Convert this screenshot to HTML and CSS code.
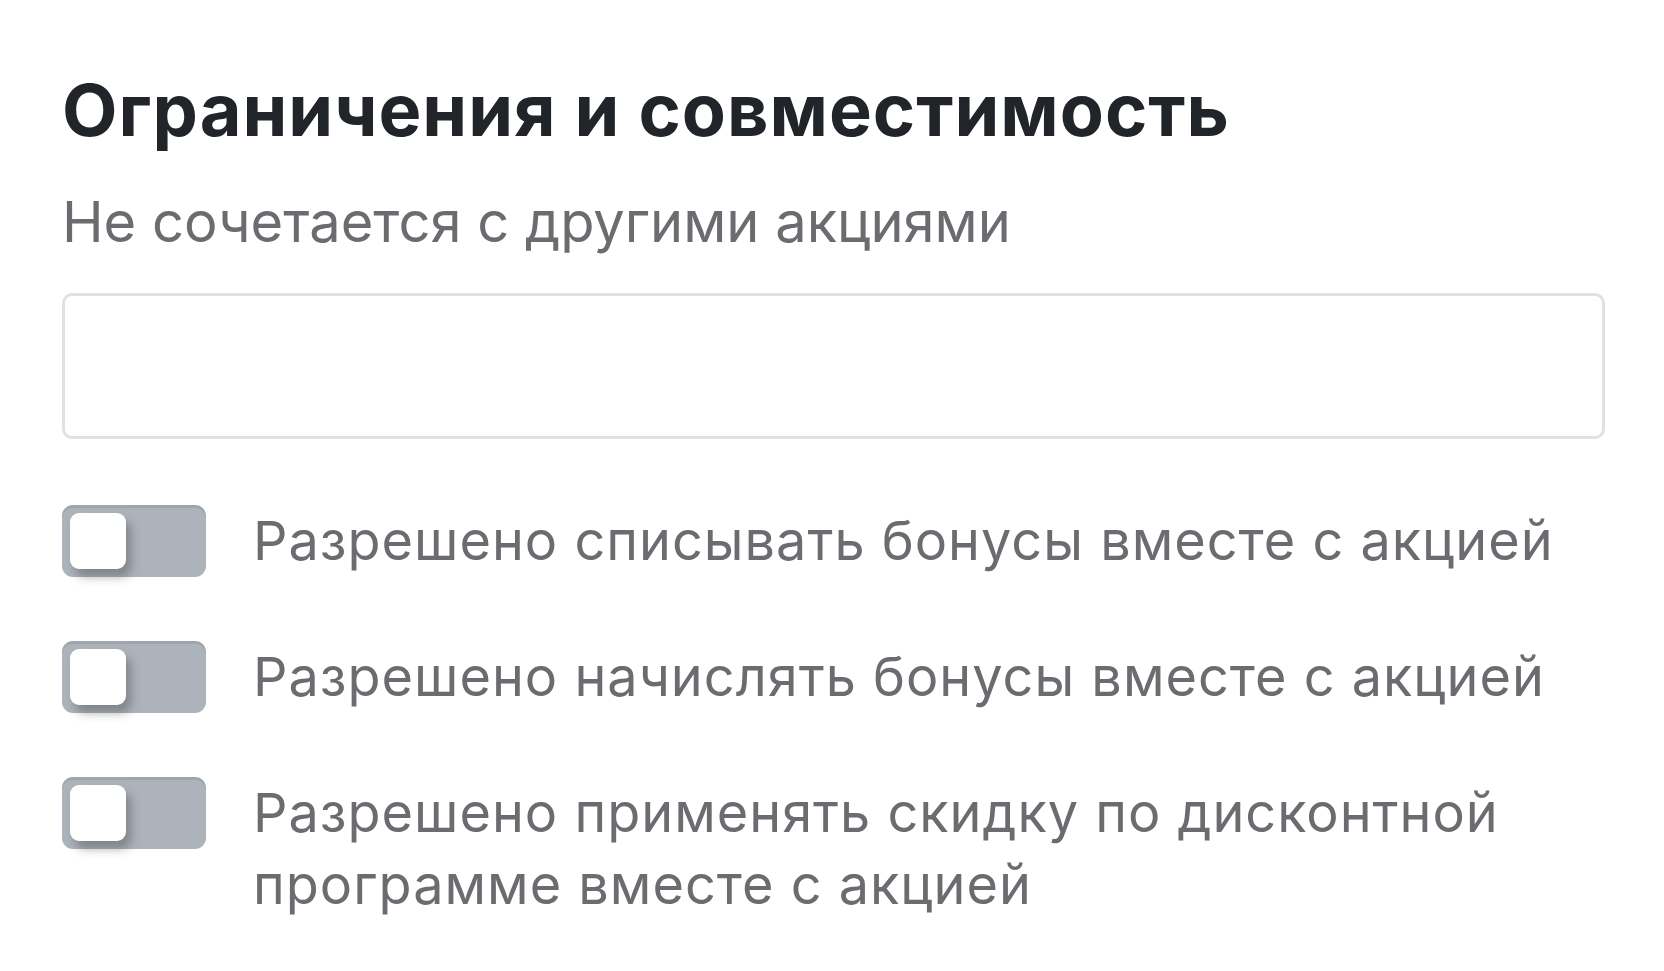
FILE: index.html
```html
<!DOCTYPE html>
<html lang="ru">
<head>
<meta charset="utf-8">
<title>Ограничения и совместимость</title>
<link rel="stylesheet" href="styles.css">
</head>
<body>
<section class="panel">
  <h1 class="panel-title">Ограничения и совместимость</h1>
  <div class="field-label">Не сочетается с другими акциями</div>
  <div class="field-input"></div>
  <div class="switches">
    <label class="switch-row">
      <span class="switch"><span class="switch-knob"></span></span>
      <span class="switch-text">Разрешено списывать бонусы вместе с акцией</span>
    </label>
    <label class="switch-row">
      <span class="switch"><span class="switch-knob"></span></span>
      <span class="switch-text">Разрешено начислять бонусы вместе с акцией</span>
    </label>
    <label class="switch-row">
      <span class="switch"><span class="switch-knob"></span></span>
      <span class="switch-text">Разрешено применять скидку по дисконтной программе вместе с акцией</span>
    </label>
  </div>
</section>
</body>
</html>
```

FILE: styles.css
```css
* { box-sizing: border-box; }
html, body { margin: 0; padding: 0; background: #ffffff; }
body { font-family: Inter, "Noto Sans", "Liberation Sans", sans-serif; }

.panel {
  padding: 67px 59px 0 62px;
}

.panel-title {
  margin: 0;
  font-size: 72px;
  line-height: 1.2;
  font-weight: 700;
  letter-spacing: 1px;
  color: #212529;
}

.field-label {
  margin-top: 30px;
  font-size: 56px;
  line-height: 1.4;
  color: #6a6c70;
}

.field-input {
  margin-top: 31px;
  height: 146px;
  border: 3px solid #dee2e6;
  border-radius: 10px;
  background: #ffffff;
}

.switches {
  margin-top: 66px;
  display: flex;
  flex-direction: column;
  gap: 63px;
}

.switch-row {
  display: flex;
  align-items: flex-start;
  gap: 47px;
}

.switch {
  flex: 0 0 auto;
  width: 144px;
  height: 72px;
  padding: 8px;
  border-radius: 11px;
  background: #adb3ba;
  box-shadow: inset 0 3px 0 rgba(0, 0, 0, 0.08);
  display: flex;
  align-items: center;
}

.switch-knob {
  width: 56px;
  height: 56px;
  border-radius: 9px;
  background: #ffffff;
  box-shadow: 5px 8px 10px rgba(60, 64, 70, 0.4);
}

.switch-text {
  font-size: 54px;
  line-height: 1.35;
  letter-spacing: 1px;
  color: #6a6c70;
}
```
